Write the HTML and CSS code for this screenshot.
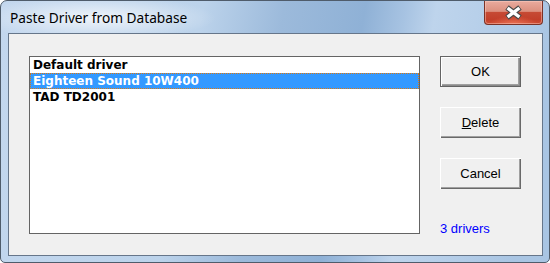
FILE: index.html
```html
<!DOCTYPE html>
<html>
<head>
<meta charset="utf-8">
<title>Paste Driver from Database</title>
<link rel="stylesheet" href="styles.css">
</head>
<body>
<div class="window">
  <div class="titlebar">
    <div class="title">Paste Driver from Database</div>
    <div class="close">
      <svg width="19" height="15" viewBox="0 0 19 15">
        <path d="M3 2.5 L16 12.5 M16 2.5 L3 12.5" stroke="#4a4a4a" stroke-width="5.6" fill="none"/>
        <path d="M3.6 3 L15.4 12 M15.4 3 L3.6 12" stroke="#ffffff" stroke-width="3.4" fill="none"/>
      </svg>
    </div>
  </div>
  <div class="client">
    <div class="listbox">
      <div class="row">Default driver</div>
      <div class="row selected">Eighteen Sound 10W400</div>
      <div class="row">TAD TD2001</div>
    </div>
    <div class="side">
      <div class="btn default">OK</div>
      <div class="btn"><span class="u">D</span>elete</div>
      <div class="btn">Cancel</div>
      <div class="count">3 drivers</div>
    </div>
  </div>
</div>
</body>
</html>
```

FILE: styles.css
```css
html, body {
  margin: 0;
  padding: 0;
  background: #ffffff;
}

.window {
  width: 550px;
  height: 263px;
  box-sizing: border-box;
  border: 1px solid #4f5c6b;
  border-radius: 7px 7px 5px 5px;
  overflow: hidden;
  display: flex;
  flex-direction: column;
  background:
    radial-gradient(ellipse 120px 22px at 95px 17px, rgba(255,255,255,0.75), rgba(255,255,255,0) 100%),
    linear-gradient(100deg, #c3d7ee 0px, #bcd3eb 200px, #9cbadb 280px, #8fb1d6 360px, #a7c3e2 400px, #bed4ec 430px, #b8d0ea 470px, #a9c5e3 550px);
}

.titlebar {
  height: 32px;
  display: flex;
  align-items: flex-start;
  justify-content: space-between;
  padding: 0 6px 0 9px;
}

.title {
  margin-top: 9px;
  font-family: "Noto Sans", "Open Sans", sans-serif;
  font-size: 13.7px;
  line-height: 16px;
  color: #000;
  white-space: nowrap;
}

.close {
  width: 59px;
  height: 24px;
  box-sizing: border-box;
  border: 1px solid #7b3226;
  border-top: none;
  border-radius: 0 0 4px 4px;
  display: flex;
  align-items: center;
  justify-content: center;
  background:
    radial-gradient(ellipse 24px 8px at 50% 100%, rgba(240,120,90,0.8), rgba(240,120,90,0) 100%),
    linear-gradient(to bottom, #e9ab9e 0%, #dc907f 45%, #c64a34 50%, #c23f2a 80%, #cf4c33 100%);
  box-shadow: inset 0 0 0 1px rgba(255,210,200,0.45);
}

.close svg {
  display: block;
}

.client {
  flex: 1;
  margin: 0 6px 6px 7px;
  border: 1px solid #66768a;
  background: #f0f0f0;
  display: flex;
  align-items: flex-start;
  gap: 20px;
  padding: 22px 20px 0 20px;
}

.listbox {
  width: 391px;
  height: 178px;
  box-sizing: border-box;
  border: 1px solid #646464;
  background: #ffffff;
  display: flex;
  flex-direction: column;
}

.row {
  font-family: "DejaVu Sans", sans-serif;
  font-weight: bold;
  font-size: 12px;
  line-height: 14px;
  padding-left: 2px;
  border: 1px solid transparent;
  color: #000;
  white-space: nowrap;
}

.row.selected {
  background: #3399ff;
  color: #ffffff;
  border: 1px dotted #e0780c;
}

.side {
  width: 81px;
  display: flex;
  flex-direction: column;
  gap: 20px;
}

.btn {
  height: 31px;
  box-sizing: border-box;
  background: #f0f0f0;
  font-family: "Liberation Sans", Arial, sans-serif;
  font-size: 13px;
  color: #000;
  display: flex;
  align-items: center;
  justify-content: center;
  box-shadow: inset 1px 1px #ffffff, inset -1px -1px #696969, inset -2px -2px #a0a0a0;
}

.btn.default {
  border: 1px solid #646464;
  box-shadow: inset 1px 1px #ffffff, inset -1px -1px #8a8a8a, inset -2px -2px #a0a0a0;
}

.u {
  text-decoration: underline;
}

.count {
  margin-top: 12px;
  font-family: "Liberation Sans", Arial, sans-serif;
  font-size: 13px;
  line-height: 16px;
  color: #0000ff;
  white-space: nowrap;
}
```
